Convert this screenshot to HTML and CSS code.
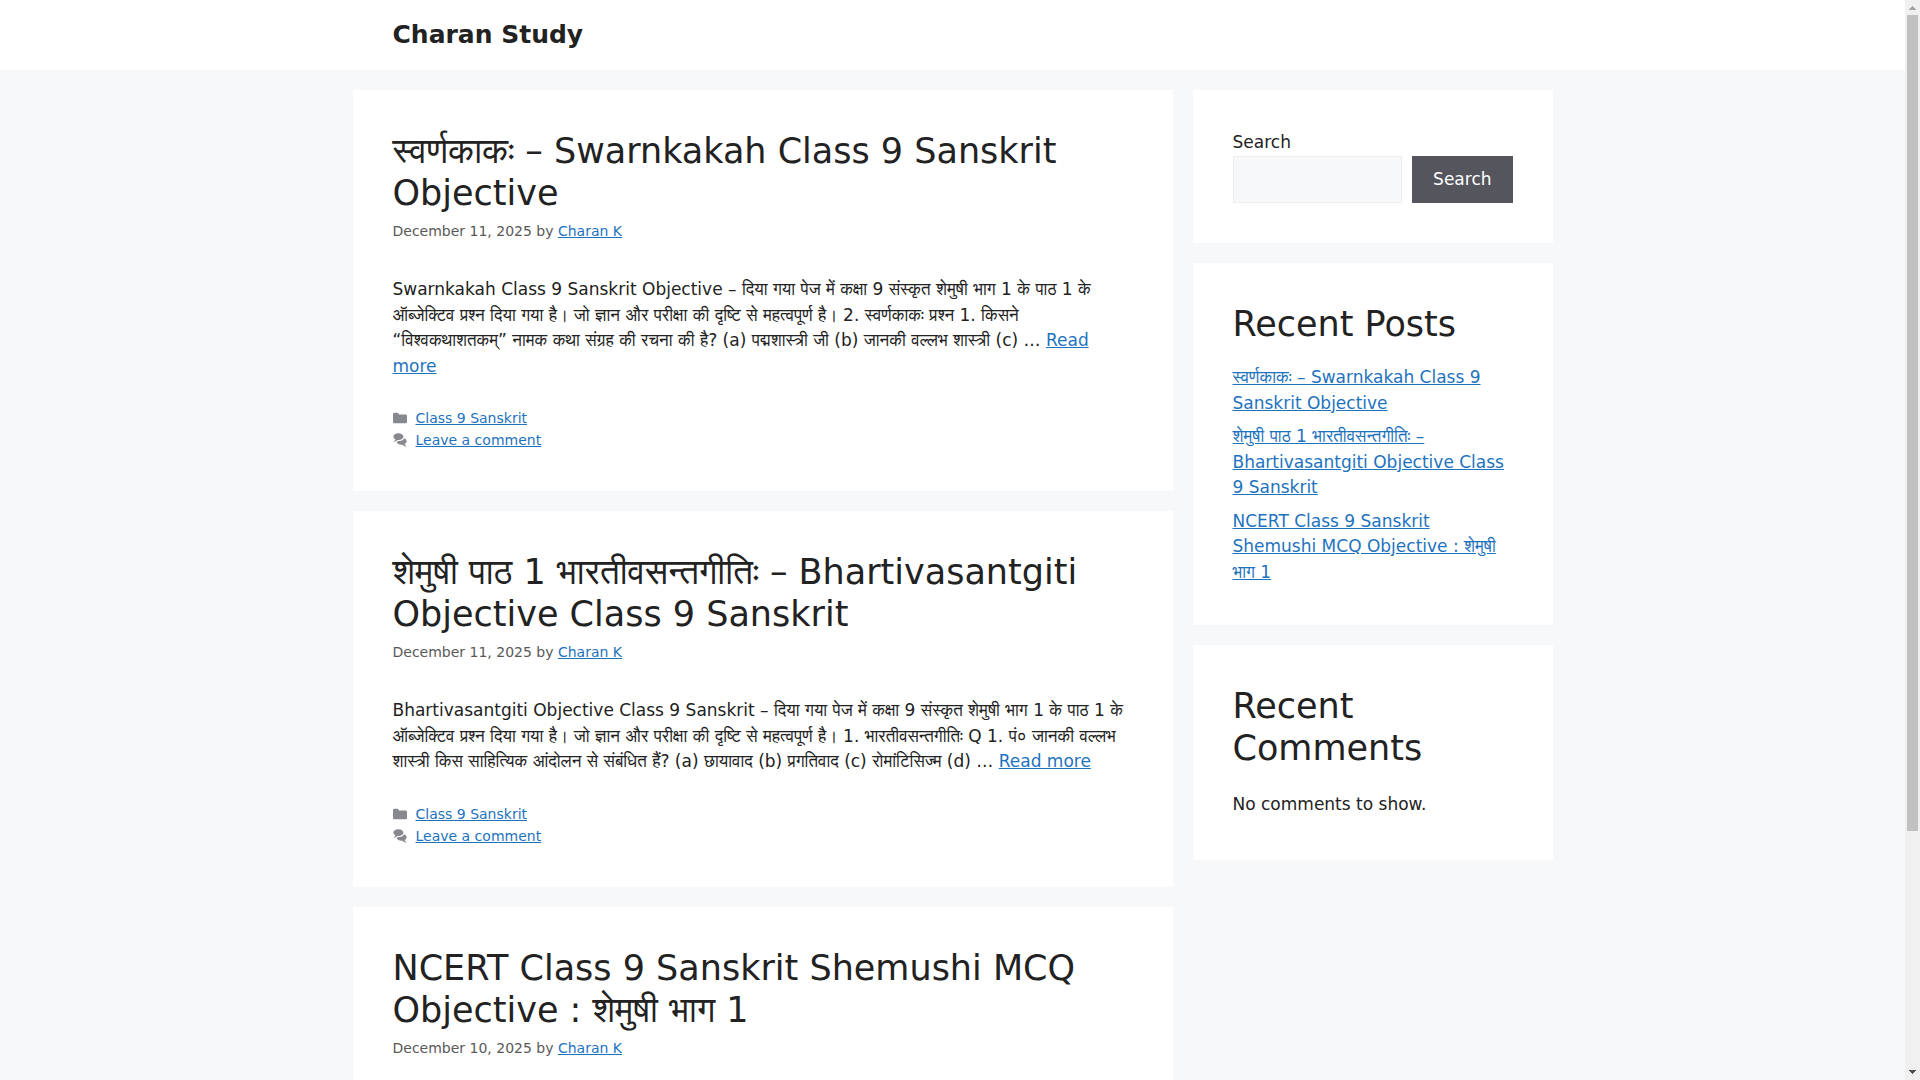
FILE: index.html
```html
<!DOCTYPE html>
<html lang="en-US">
<head>
    <meta charset="UTF-8">
    <meta name="viewport" content="width=device-width, initial-scale=1.0">
    <title>Charan Study</title>
    <link rel="stylesheet" href="styles.css">
</head>
<body>
    <!-- shared icons -->
    <svg class="icon-defs" width="0" height="0" aria-hidden="true">
        <symbol id="icon-folder" viewBox="0 0 512 512">
            <path d="M0 112c0-26.51 21.49-48 48-48h110.014a48 48 0 0143.592 27.907l12.349 26.791A16 16 0 00228.486 128H464c26.51 0 48 21.49 48 48v224c0 26.51-21.49 48-48 48H48c-26.51 0-48-21.49-48-48V112z"/>
        </symbol>
        <symbol id="icon-comments" viewBox="0 0 512 512">
            <path d="M132.838 329.973a435.298 435.298 0 0016.769-9.004c13.363-7.574 26.587-16.142 37.419-25.507 7.544.597 15.27.925 23.098.925 54.905 0 105.634-15.311 143.285-41.28 23.728-16.365 43.115-37.692 54.155-62.645 54.739 22.205 91.498 63.272 91.498 110.286 0 42.186-29.558 79.498-75.09 102.828 23.46 49.216 75.09 101.709 75.09 101.709s-115.837-38.35-154.424-78.46c-9.956 1.12-20.297 1.758-30.793 1.758-88.727 0-162.927-43.071-181.007-100.61z"/>
            <path d="M383.371 132.502c0 70.603-82.961 127.787-185.216 127.787-10.496 0-20.837-.639-30.793-1.757-38.587 40.093-154.424 78.429-154.424 78.429s51.63-52.472 75.09-101.67c-45.532-23.321-75.09-60.619-75.09-102.79C12.938 61.9 95.9 4.716 198.155 4.716 300.41 4.715 383.37 61.9 383.37 132.502z"/>
        </symbol>
    </svg>

    <div class="viewport">
        <div class="site">
            <header class="site-header">
                <div class="inside-header">
                    <a class="site-title" href="#">Charan Study</a>
                </div>
            </header>

            <div class="site-content">
                <main class="site-main">
                    <article class="post">
                        <h2 class="entry-title"><a href="#">स्वर्णकाकः – Swarnkakah Class 9 Sanskrit Objective</a></h2>
                        <div class="entry-meta">December 11, 2025 by <a href="#">Charan K</a></div>
                        <p class="entry-summary">Swarnkakah Class 9 Sanskrit Objective – दिया गया पेज में कक्षा 9 संस्कृत शेमुषी भाग 1 के पाठ 1 के ऑब्जेक्टिव प्रश्न दिया गया है। जो ज्ञान और परीक्षा की दृष्टि से महत्वपूर्ण है। 2. स्वर्णकाकः प्रश्न 1. किसने “विश्वकथाशतकम्” नामक कथा संग्रह की रचना की है? (a) पद्मशास्त्री जी (b) जानकी वल्लभ शास्त्री (c) … <a href="#">Read more</a></p>
                        <footer class="entry-footer">
                            <div class="footer-row"><svg class="icon"><use href="#icon-folder"/></svg><a href="#">Class 9 Sanskrit</a></div>
                            <div class="footer-row"><svg class="icon"><use href="#icon-comments"/></svg><a href="#">Leave a comment</a></div>
                        </footer>
                    </article>

                    <article class="post">
                        <h2 class="entry-title"><a href="#">शेमुषी पाठ 1 भारतीवसन्तगीतिः – Bhartivasantgiti Objective Class 9 Sanskrit</a></h2>
                        <div class="entry-meta">December 11, 2025 by <a href="#">Charan K</a></div>
                        <p class="entry-summary">Bhartivasantgiti Objective Class 9 Sanskrit – दिया गया पेज में कक्षा 9 संस्कृत शेमुषी भाग 1 के पाठ 1 के ऑब्जेक्टिव प्रश्न दिया गया है। जो ज्ञान और परीक्षा की दृष्टि से महत्वपूर्ण है। 1. भारतीवसन्तगीतिः Q 1. पं० जानकी वल्लभ शास्त्री किस साहित्यिक आंदोलन से संबंधित हैं? (a) छायावाद (b) प्रगतिवाद (c) रोमांटिसिज्म (d) … <a href="#">Read more</a></p>
                        <footer class="entry-footer">
                            <div class="footer-row"><svg class="icon"><use href="#icon-folder"/></svg><a href="#">Class 9 Sanskrit</a></div>
                            <div class="footer-row"><svg class="icon"><use href="#icon-comments"/></svg><a href="#">Leave a comment</a></div>
                        </footer>
                    </article>

                    <article class="post">
                        <h2 class="entry-title"><a href="#">NCERT Class 9 Sanskrit Shemushi MCQ Objective : शेमुषी भाग 1</a></h2>
                        <div class="entry-meta">December 10, 2025 by <a href="#">Charan K</a></div>
                    </article>
                </main>

                <aside class="sidebar">
                    <section class="widget">
                        <form class="search-form">
                            <label for="search">Search</label>
                            <div class="search-row">
                                <input type="search" id="search">
                                <button type="submit">Search</button>
                            </div>
                        </form>
                    </section>

                    <section class="widget">
                        <h2>Recent Posts</h2>
                        <ul class="recent-posts">
                            <li><a href="#">स्वर्णकाकः – Swarnkakah Class 9 Sanskrit Objective</a></li>
                            <li><a href="#">शेमुषी पाठ 1 भारतीवसन्तगीतिः – Bhartivasantgiti Objective Class 9 Sanskrit</a></li>
                            <li><a href="#">NCERT Class 9 Sanskrit Shemushi MCQ Objective : शेमुषी भाग 1</a></li>
                        </ul>
                    </section>

                    <section class="widget">
                        <h2>Recent Comments</h2>
                        <div class="no-comments">No comments to show.</div>
                    </section>
                </aside>
            </div>
        </div>

        <div class="scrollbar" aria-hidden="true">
            <svg class="arrow arrow-up" viewBox="0 0 15 15"><path d="M7 6h1v1h1v1h1v1h1v1H4V9h1V8h1V7h1z"/></svg>
            <div class="track"><div class="thumb"></div></div>
            <svg class="arrow arrow-down" viewBox="0 0 15 15"><path d="M4 5h7v1h-1v1H9v1H8v1H7V8H6V7H5V6H4z"/></svg>
        </div>
    </div>
</body>
</html>
```
FILE: styles.css
```css
* {
    box-sizing: border-box;
}

body {
    margin: 0;
    font-family: "DejaVu Sans", FreeSans, "Noto Sans", sans-serif;
    font-size: 17px;
    line-height: 1.5;
    color: #222222;
    background: #f7f8f9;
}

a {
    color: #1e73be;
}

h2 {
    margin: 0 0 20px;
    font-size: 35px;
    font-weight: 400;
    line-height: 1.2;
}

.icon-defs {
    position: absolute;
}

.viewport {
    display: flex;
    height: 100vh;
    overflow: hidden;
}

.site {
    flex: 1;
    min-width: 0;
    overflow: hidden;
}

/* Header */
.site-header {
    background: #ffffff;
}

.inside-header {
    display: flex;
    align-items: center;
    max-width: 1200px;
    margin: 0 auto;
    padding: 20px 40px;
}

.site-title {
    font-size: 25px;
    font-weight: bold;
    line-height: 30px;
    color: #222222;
    text-decoration: none;
}

/* Columns */
.site-content {
    display: flex;
    gap: 20px;
    max-width: 1200px;
    margin: 20px auto;
}

.site-main,
.sidebar {
    display: flex;
    flex-direction: column;
    gap: 20px;
}

.site-main {
    flex: 1;
    min-width: 0;
}

.sidebar {
    width: 30%;
}

.post,
.widget {
    padding: 40px;
    background: #ffffff;
}

/* Posts */
.entry-title {
    margin: 0;
}

.entry-title a {
    color: #222222;
    text-decoration: none;
}

.entry-meta,
.entry-footer {
    font-size: 14px;
    line-height: 22px;
    color: #595959;
}

.entry-meta {
    margin-top: 6px;
}

.entry-summary {
    margin: 35px 0 0;
}

.entry-footer {
    margin-top: 28px;
}

.footer-row {
    display: flex;
    align-items: center;
    gap: 9px;
}

.icon {
    width: 14px;
    height: 14px;
    fill: #575760;
    opacity: 0.7;
}

/* Sidebar */
.search-form label {
    display: block;
}

.search-row {
    display: flex;
    gap: 10px;
}

.search-row input {
    flex: 1;
    min-width: 0;
    padding: 10px 15px;
    border: 1px solid #eeeeee;
    border-radius: 0;
    background: #f7f8f9;
    font: inherit;
    appearance: none;
}

.search-row button {
    padding: 10px 20px;
    border: 1px solid #55555e;
    background: #55555e;
    color: #ffffff;
    font: inherit;
    cursor: pointer;
}

.recent-posts {
    display: flex;
    flex-direction: column;
    gap: 8px;
    margin: 0;
    padding: 0;
    list-style: none;
}

.no-comments {
    line-height: 1.8;
}

/* Scrollbar */
.scrollbar {
    display: flex;
    flex-direction: column;
    width: 15px;
    background: #f0f0f0;
}

.arrow {
    width: 15px;
    height: 15px;
}

.arrow-up {
    fill: #a3a3a3;
}

.arrow-down {
    fill: #505050;
}

.track {
    flex: 1;
    padding: 0 2px;
}

.thumb {
    height: 77.7%;
    background: #c1c1c1;
}
```
